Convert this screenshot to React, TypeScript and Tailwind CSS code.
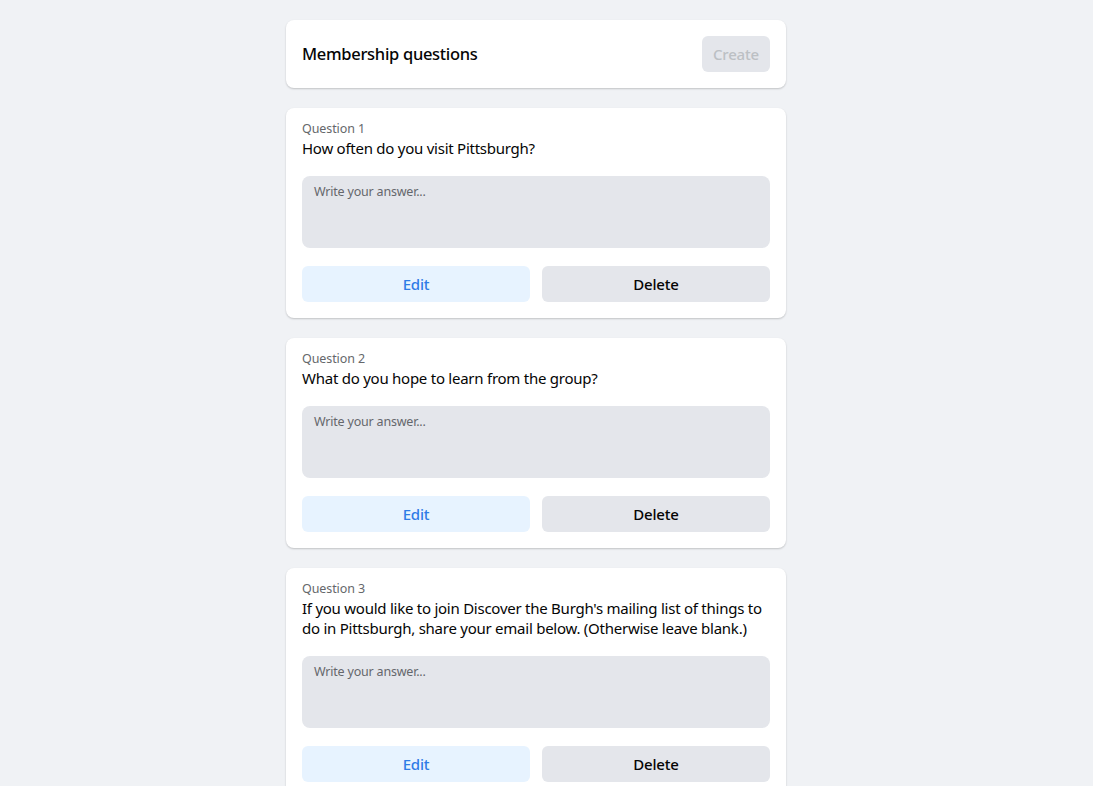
import React from "react";

const questions = [
  "How often do you visit Pittsburgh?",
  "What do you hope to learn from the group?",
  "If you would like to join Discover the Burgh's mailing list of things to do in Pittsburgh, share your email below. (Otherwise leave blank.)",
];

function QuestionCard({ index, text }: { index: number; text: string }) {
  return (
    <div className="bg-white rounded-lg shadow-[0_1px_2px_rgba(0,0,0,0.2)] px-4 pt-[13px] pb-4">
      <div className="text-[12.5px] leading-4 text-[#65676b] tracking-[-0.1px]">Question {index}</div>
      <div className="mt-[1px] text-[15px] leading-5 text-[#050505] font-normal tracking-[-0.25px]">{text}</div>
      <div className="mt-[18px] h-[72px] rounded-lg bg-[#e4e6eb] px-3 pt-2">
        <div className="text-[12.5px] leading-4 text-[#65676b] tracking-[-0.2px]">Write your answer...</div>
      </div>
      <div className="mt-[18px] flex gap-3">
        <button className="flex-1 h-9 rounded-md bg-[#e7f3ff] text-[#2d7be6] text-[15px] font-medium tracking-[-0.2px]">
          Edit
        </button>
        <button className="flex-1 h-9 rounded-md bg-[#e4e6eb] text-[#050505] text-[15px] font-medium tracking-[-0.2px]">
          Delete
        </button>
      </div>
    </div>
  );
}

export default function App() {
  return (
    <div
      className="min-h-screen bg-[#f0f2f5] w-full"
      style={{ fontFamily: '"Noto Sans", "Open Sans", sans-serif' }}
    >
      <div className="w-[1072px] pt-5 pb-5">
        <div className="w-[500px] mx-auto flex flex-col gap-5">
          <div className="bg-white rounded-lg shadow-[0_1px_2px_rgba(0,0,0,0.2)] p-4 flex items-center justify-between">
            <div className="text-[16.5px] font-medium text-[#050505] tracking-[-0.3px]">Membership questions</div>
            <button className="h-9 w-[68px] rounded-md bg-[#e4e6eb] text-[#bcc0c4] text-[15px] font-medium tracking-[-0.2px]">
              Create
            </button>
          </div>
          {questions.map((q, i) => (
            <QuestionCard key={i} index={i + 1} text={q} />
          ))}
        </div>
      </div>
    </div>
  );
}
